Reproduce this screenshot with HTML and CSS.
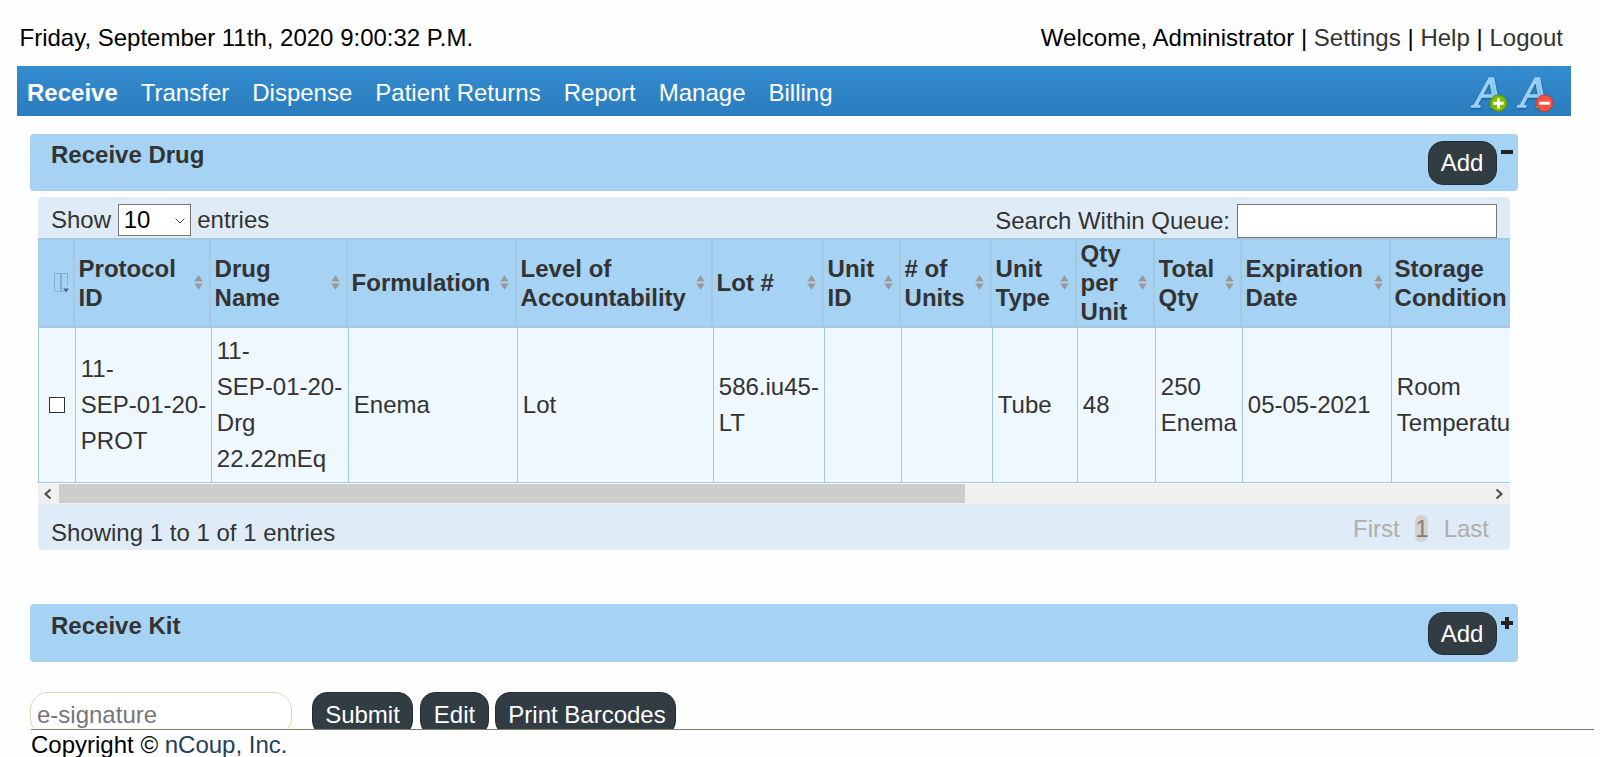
FILE: index.html
```html
<!DOCTYPE html>
<html lang="en">
<head>
<meta charset="utf-8">
<title>Receive</title>
<link rel="stylesheet" href="styles.css">
</head>
<body>
<svg class="defs" width="0" height="0" aria-hidden="true">
  <defs>
    <linearGradient id="ink" x1="0" y1="0" x2="1" y2="1">
      <stop offset="0" stop-color="#d3ecff"/><stop offset="0.5" stop-color="#8fcaf8"/><stop offset="1" stop-color="#5aaeee"/>
    </linearGradient>
    <symbol id="sort" viewBox="0 0 9 15">
      <path d="M4.5 0 8.7 6.6H.3zM4.5 15 .3 8.4h8.4z" fill="#999"/>
      <path d="M.3 7.5h8.4" stroke="#b9d3e6" stroke-width="0.8"/>
    </symbol>
  </defs>
</svg>

<header class="top">
  <div>Friday, September 11th, 2020 9:00:32 P.M.</div>
  <div class="user">Welcome, Administrator | <a>Settings</a> | <a>Help</a> | <a>Logout</a></div>
</header>

<nav class="nav">
  <ul class="menu">
    <li class="active">Receive</li><li>Transfer</li><li>Dispense</li><li>Patient Returns</li><li>Report</li><li>Manage</li><li>Billing</li>
  </ul>
  <div class="sizes">
    <svg width="40" height="42" viewBox="0 0 40 42">
      <text class="letter" x="5" y="36">A</text>
      <circle cx="29.5" cy="32.2" r="8.3" fill="#7dbb00" stroke="#4f8f12" stroke-width="1"/>
      <path d="M29.5 27v10.4M24.3 32.2h10.4" stroke="#fff" stroke-width="3"/>
    </svg>
    <svg width="40" height="42" viewBox="0 0 40 42">
      <text class="letter" x="5" y="36">A</text>
      <circle cx="29.5" cy="32.2" r="8.3" fill="#f4533f" stroke="#c23a33" stroke-width="1"/>
      <path d="M24.3 32.2h10.4" stroke="#fff" stroke-width="3"/>
    </svg>
  </div>
</nav>

<main class="main">
  <section class="panel">
    <h2>Receive Drug</h2>
    <button class="btn add">Add</button>
    <svg class="toggle" width="14" height="14" viewBox="0 0 14 14"><path d="M1 7h12" stroke="#222" stroke-width="4"/></svg>
  </section>

  <section class="grid">
    <div class="toolbar">
      <div class="length">Show
        <span class="select">10<svg width="10" height="6" viewBox="0 0 10 6"><path d="M.6.6 5 5 9.4.6" fill="none" stroke="#444" stroke-width="1"/></svg></span>
        entries</div>
      <label class="search">Search Within Queue: <input type="text"></label>
    </div>
    <div class="scroller">
      <table>
        <colgroup><col class="c0"><col class="c1"><col class="c2"><col class="c3"><col class="c4"><col class="c5"><col class="c6"><col class="c7"><col class="c8"><col class="c9"><col class="c10"><col class="c11"><col class="c12"></colgroup>
        <thead>
          <tr>
            <th><svg class="cols" width="15" height="20" viewBox="0 0 15 20"><path d="M.5.5h13v12M.5.5v18h6V.5M7.5.5v18h3" fill="none" stroke="#82aed2" stroke-width="1"/><path d="M9 15.5h6l-3 4z" fill="#46698a"/></svg></th>
            <th><div class="head"><span>Protocol<br>ID</span><svg class="sort"><use href="#sort"/></svg></div></th>
            <th><div class="head"><span>Drug<br>Name</span><svg class="sort"><use href="#sort"/></svg></div></th>
            <th><div class="head odd"><span>Formulation</span><svg class="sort"><use href="#sort"/></svg></div></th>
            <th><div class="head"><span>Level of<br>Accountability</span><svg class="sort"><use href="#sort"/></svg></div></th>
            <th><div class="head odd"><span>Lot #</span><svg class="sort"><use href="#sort"/></svg></div></th>
            <th><div class="head"><span>Unit<br>ID</span><svg class="sort"><use href="#sort"/></svg></div></th>
            <th><div class="head"><span># of<br>Units</span><svg class="sort"><use href="#sort"/></svg></div></th>
            <th><div class="head"><span>Unit<br>Type</span><svg class="sort"><use href="#sort"/></svg></div></th>
            <th><div class="head odd"><span>Qty<br>per<br>Unit</span><svg class="sort"><use href="#sort"/></svg></div></th>
            <th><div class="head"><span>Total<br>Qty</span><svg class="sort"><use href="#sort"/></svg></div></th>
            <th><div class="head"><span>Expiration<br>Date</span><svg class="sort"><use href="#sort"/></svg></div></th>
            <th><div class="head"><span>Storage<br>Condition</span></div></th>
          </tr>
        </thead>
        <tbody>
          <tr>
            <td class="pick"><span class="check"></span></td>
            <td>11-<br>SEP-01-20-<br>PROT</td>
            <td>11-<br>SEP-01-20-<br>Drg<br>22.22mEq</td>
            <td>Enema</td>
            <td>Lot</td>
            <td>586.iu45-<br>LT</td>
            <td></td>
            <td></td>
            <td>Tube</td>
            <td>48</td>
            <td>250<br>Enema</td>
            <td>05-05-2021</td>
            <td>Room<br>Temperature</td>
          </tr>
        </tbody>
      </table>
    </div>
    <div class="hbar">
      <svg width="21" height="20" viewBox="0 0 21 20"><path d="M12.5 5.5 7.5 10l5 4.5" fill="none" stroke="#4a4a4a" stroke-width="2"/></svg>
      <span class="thumb"></span>
      <svg class="right" width="21" height="20" viewBox="0 0 21 20"><path d="M7.5 5.5l5 4.5-5 4.5" fill="none" stroke="#4a4a4a" stroke-width="2"/></svg>
    </div>
    <div class="foot">
      <div class="info">Showing 1 to 1 of 1 entries</div>
      <div class="pager"><span>First</span><span class="current">1</span><span>Last</span></div>
    </div>
  </section>

  <section class="panel kit">
    <h2>Receive Kit</h2>
    <button class="btn add">Add</button>
    <svg class="toggle" width="14" height="14" viewBox="0 0 14 14"><path d="M1 7h12M7 1v12" stroke="#222" stroke-width="4"/></svg>
  </section>

  <div class="actions">
    <input class="sign" type="text" placeholder="e-signature">
    <button class="btn submit">Submit</button>
    <button class="btn edit">Edit</button>
    <button class="btn print">Print Barcodes</button>
  </div>
</main>

<footer class="footer">Copyright © <a>nCoup, Inc.</a></footer>
</body>
</html>
```

FILE: styles.css
```css
* { box-sizing: border-box; }
html, body { height: 757px; overflow: hidden; }
body {
  margin: 0;
  background: #fefefe;
  color: #000;
  font: 24px/28px "Liberation Sans", Arial, sans-serif;
  display: flex;
  flex-direction: column;
}
.defs { position: absolute; }
svg { display: block; }

.top {
  height: 66px;
  padding: 24px 37px 0 19.5px;
  display: flex;
  justify-content: space-between;
  white-space: nowrap;
}
.user { letter-spacing: 0.02px; }
.top a { color: #333; }

.nav {
  height: 50px;
  margin: 0 29px 0 17px;
  padding: 0 16px 0 10px;
  background: linear-gradient(#348ccf, #2a7cbd);
  display: flex;
  justify-content: space-between;
  align-items: center;
  color: #fff;
}
.menu { display: flex; gap: 23px; margin: 0; padding: 4px 0 0; list-style: none; white-space: nowrap; }
.active { font-weight: bold; }
.sizes { display: flex; gap: 6px; padding-top: 2px; }
.sizes svg { overflow: visible; }
.letter {
  font: italic 45px "Liberation Serif", serif;
  fill: url(#ink);
  stroke: #9bd0f8;
  stroke-width: 1.5px;
  filter: drop-shadow(0 1px 1px rgba(0, 40, 90, .5));
}

.main { height: 613px; padding: 18px 0 0 30px; overflow: hidden; }

.panel {
  width: 1488px;
  height: 57px;
  padding: 7px 4px 0 21px;
  border-radius: 4px;
  background: #a6d2f4;
  display: flex;
  align-items: flex-start;
}
.panel h2 { margin: 0 auto 0 0; font-size: 24px; line-height: 28px; color: #333; }
.toggle { margin: 4px 0 0 3px; }
.kit { height: 58px; margin-top: 54px; padding-top: 8px; }

.btn {
  height: 44px;
  padding: 0;
  border: 1px solid #232e34;
  border-radius: 15px;
  background: #323c43;
  color: #fff;
  font: 24px/40px "Liberation Sans", Arial, sans-serif;
}
.add { width: 69px; padding-right: 1px; }
.kit .add { height: 43px; }

.grid {
  width: 1472px;
  height: 353px;
  margin: 6px 0 0 8px;
  border-radius: 4px;
  background: #dfecf7;
  color: #333;
  overflow: hidden;
}
.toolbar { height: 41px; padding: 7px 13px 0 13px; display: flex; justify-content: space-between; white-space: nowrap; }
.length { display: flex; gap: 6.6px; line-height: 32px; }
.select {
  width: 73px;
  height: 32px;
  padding: 0 5px 0 5px;
  border: 1px solid #767676;
  background: #fff;
  color: #000;
  line-height: 30px;
  display: flex;
  justify-content: space-between;
  align-items: flex-start;
}
.select svg { margin-top: 13px; }
.search { display: flex; gap: 7px; line-height: 33px; }
.search input { width: 260px; height: 34px; border: 1px solid #767676; background: #fff; }

.scroller { height: 246px; overflow: hidden; background: #fff; }
table { width: 1553px; table-layout: fixed; border-collapse: separate; border-spacing: 0; }
.c0 { width: 37px; }
.c1 { width: 136px; }
.c2 { width: 137px; }
.c3 { width: 169px; }
.c4 { width: 196px; }
.c5 { width: 111px; }
.c6 { width: 77px; }
.c7 { width: 91px; }
.c8 { width: 85px; }
.c9 { width: 78px; }
.c10 { width: 87px; }
.c11 { width: 149px; }
.c12 { width: 200px; }
th {
  height: 90px;
  padding: 0 0 0 3.6px;
  border: solid #a3c8df;
  border-width: 2px 2px 2px 0;
  background: #a6d2f4;
  text-align: left;
  line-height: 29px;
}
th:first-child { border-left-width: 1px; padding-left: 15px; }
.head { height: 86px; display: flex; justify-content: space-between; align-items: center; padding-right: 6px; white-space: nowrap; }
.odd span { padding-bottom: 2px; }
.sort { width: 9px; height: 15px; flex: none; margin-bottom: 1px; }
td {
  height: 155px;
  padding: 0 0 0 4.8px;
  border: solid #a3c8df;
  border-width: 0 0 1px 1px;
  background: #eff7ff;
  line-height: 36px;
  white-space: nowrap;
}
.pick { padding-left: 10px; }
.check { display: block; width: 16px; height: 16px; border: 1px solid #333; background: #fff; }

.hbar { height: 20px; background: #f0f0f0; display: flex; }
.thumb { width: 906px; height: 19px; background: #cdcdcd; }
.right { margin-left: auto; }

.foot { height: 46px; padding: 0 21px 0 13px; display: flex; justify-content: space-between; }
.info { padding-top: 15px; }
.pager { display: flex; gap: 15.5px; padding-top: 11px; color: #b0adab; }
.current { width: 13px; height: 27px; border-radius: 6px; background: #d6d2d0; color: #8c7d7b; }

.actions { margin-top: 30px; display: flex; }
.sign {
  width: 262px;
  height: 44px;
  margin-right: 20px;
  padding: 1px 6px 0;
  border: 1px solid #d9d9b8;
  border-radius: 18px;
  background: #fff;
  font: 24px "Liberation Sans", Arial, sans-serif;
}
.sign::placeholder { color: #777; }
.actions .btn { padding-top: 2px; }
.submit { width: 101px; margin-right: 7px; }
.edit { width: 69px; margin-right: 6px; }
.actions .print { width: 181px; padding-left: 3px; }

.footer { height: 28px; margin: 0 6px 0 31px; border-top: 1px solid #7f7f69; line-height: 30px; }
.footer a { color: #23415a; }
```
